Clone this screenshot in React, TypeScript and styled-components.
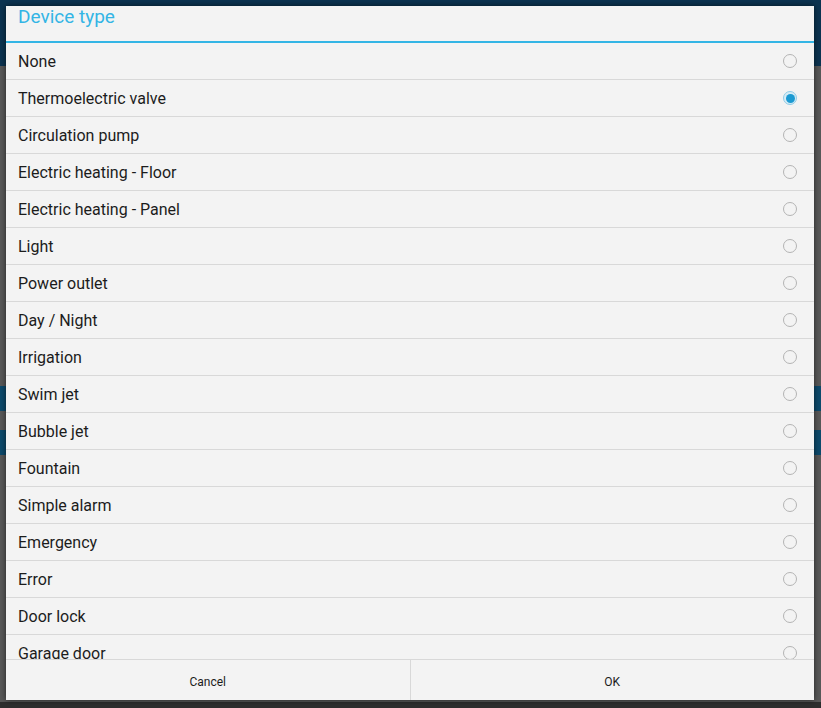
import React, { useState } from 'react'
import styled, { createGlobalStyle } from 'styled-components'

const GlobalStyle = createGlobalStyle`
  html, body {
    margin: 0;
    padding: 0;
    background: #2e2e2e;
  }
  body {
    font-family: Roboto, 'Noto Sans', sans-serif;
  }
  * {
    box-sizing: border-box;
  }
`

const DEVICE_TYPES = [
  'None',
  'Thermoelectric valve',
  'Circulation pump',
  'Electric heating - Floor',
  'Electric heating - Panel',
  'Light',
  'Power outlet',
  'Day / Night',
  'Irrigation',
  'Swim jet',
  'Bubble jet',
  'Fountain',
  'Simple alarm',
  'Emergency',
  'Error',
  'Door lock',
  'Garage door',
]

/* dimmed app screen behind the dialog */
const Screen = styled.div`
  position: relative;
  width: 821px;
  height: 708px;
  overflow: hidden;
  display: flex;
  flex-direction: column;
  background: #2e2e2e;
`

const ActionBar = styled.div`
  height: 66px;
  flex-shrink: 0;
  background: #0c3451;
`

const Content = styled.div`
  height: 636px;
  flex-shrink: 0;
  background: #585858;
  display: flex;
  flex-direction: column;
  padding-top: 320px;
  gap: 19px;
`

const Band = styled.div`
  height: 25px;
  flex-shrink: 0;
  background: #0d4a6c;
`

const Dialog = styled.div`
  position: absolute;
  top: 6px;
  left: 6px;
  width: 808px;
  height: 694px;
  background: #f3f3f3;
  display: flex;
  flex-direction: column;
  box-shadow: 0 0 6px rgba(0, 0, 0, 0.6);
`

const Title = styled.div`
  height: 37px;
  flex-shrink: 0;
  padding: 0 12px;
  line-height: 22px;
  font-size: 19px;
  color: #33b5e5;
  border-bottom: 2px solid #33b5e5;
`

const List = styled.div`
  flex: 1;
  overflow: hidden;
`

const Row = styled.label`
  height: 37px;
  display: flex;
  align-items: center;
  justify-content: space-between;
  padding: 0 17px 0 12px;
  border-bottom: 1px solid #d8d8d8;
  font-size: 16px;
  color: #1c1c1c;
  cursor: pointer;
`

const Radio = styled.span<{ checked: boolean }>`
  width: 14px;
  height: 14px;
  border-radius: 50%;
  border: 1px solid ${({ checked }) => (checked ? '#8fcbe6' : '#b4b4b4')};
  background: ${({ checked }) => (checked ? '#d6ecf6' : 'transparent')};
  display: flex;
  align-items: center;
  justify-content: center;

  &::after {
    content: '';
    width: 9px;
    height: 9px;
    border-radius: 50%;
    background: ${({ checked }) => (checked ? '#1b9ad2' : 'transparent')};
  }
`

const ButtonBar = styled.div`
  height: 41px;
  flex-shrink: 0;
  display: flex;
  border-top: 1px solid #d8d8d8;
`

const Button = styled.button<{ divider?: boolean }>`
  flex: 1;
  border: none;
  border-right: ${({ divider }) => (divider ? '1px solid #d8d8d8' : 'none')};
  background: transparent;
  font-family: Roboto, sans-serif;
  font-size: 12px;
  color: #1c1c1c;
  padding: 3px 0 0;
  cursor: pointer;
`

export default function App() {
  const [selected, setSelected] = useState(1)

  return (
    <>
      <GlobalStyle />
      <Screen>
        <ActionBar />
        <Content>
          <Band />
          <Band />
        </Content>
        <Dialog>
          <Title>Device type</Title>
          <List>
            {DEVICE_TYPES.map((name, index) => (
              <Row key={name} onClick={() => setSelected(index)}>
                {name}
                <Radio checked={index === selected} />
              </Row>
            ))}
          </List>
          <ButtonBar>
            <Button divider>Cancel</Button>
            <Button>OK</Button>
          </ButtonBar>
        </Dialog>
      </Screen>
    </>
  )
}
